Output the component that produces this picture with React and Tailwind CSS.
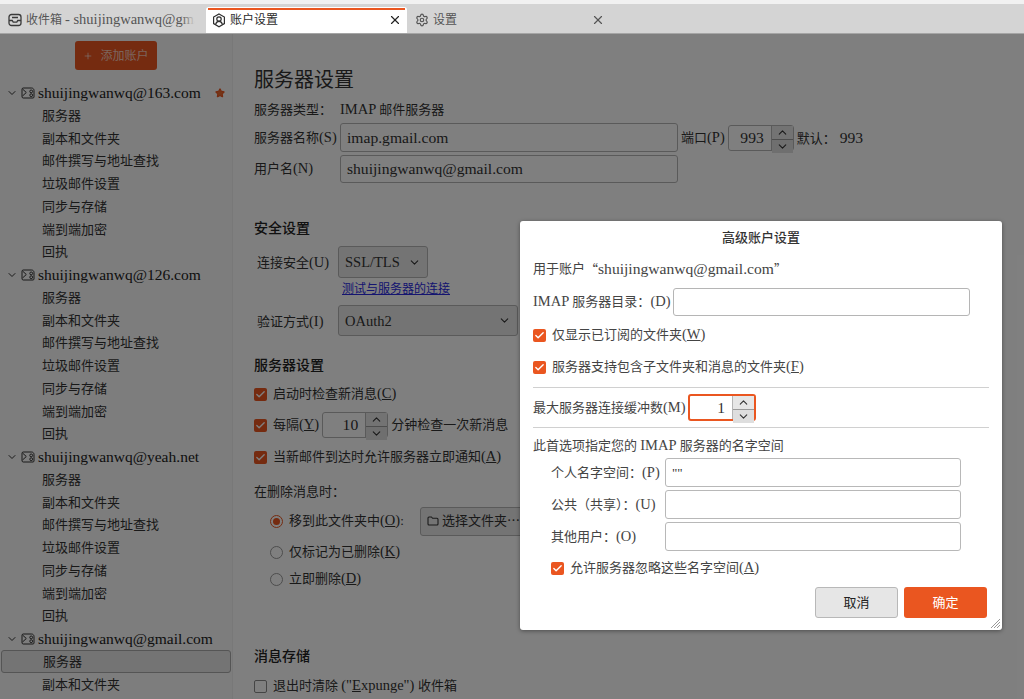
import React from "react";
import { ChevronDown, ChevronUp, X, Settings, Plus, Star, Check } from "lucide-react";

const font = "font-['Liberation_Serif','Noto_Sans_CJK_SC',serif]";

const L = ({ children, className = "" }) => <span className={`text-[14.5px] ${className}`}>{children}</span>;
const K = ({ c }) => (
  <L>
    (<span className="underline">{c}</span>)
  </L>
);

const InboxIcon = () => (
  <svg width="14" height="14" viewBox="0 0 14 14" fill="none" stroke="#3a3a3a" strokeWidth="1.3" className="shrink-0">
    <rect x="1" y="1.5" width="12" height="11" rx="2.5" />
    <path d="M1 7.5h3.2l1 1.6h3.6l1-1.6H13M4 4.5h6" />
  </svg>
);

const AccountTabIcon = () => (
  <svg width="14" height="15" viewBox="0 0 14 15" fill="none" stroke="#2f2f2f" strokeWidth="1.2" className="shrink-0">
    <path d="M7 1l5.4 3v6.6L7 13.8 1.6 10.6V4z" />
    <circle cx="7" cy="6" r="2.2" />
    <path d="M3.6 11.4c.5-2 1.8-3 3.4-3s2.9 1 3.4 3" />
  </svg>
);

const MailIcon = () => (
  <svg width="14" height="12" viewBox="0 0 14 12" fill="none" stroke="#333" strokeWidth="1" className="shrink-0">
    <path d="M2.2 1h8.4C12 1 13 2.1 13 3.5V10c0 .6-.4 1-1 1H2.2C1.5 11 1 10.5 1 9.8V2.2C1 1.5 1.5 1 2.2 1z" />
    <path d="M1.5 2l3.8 3.5L1.5 9" />
    <circle cx="10.2" cy="4.4" r="1.4" />
    <circle cx="10.2" cy="8.2" r="1.4" />
  </svg>
);

const Checkbox = ({ on = true }) => (
  <span
    className={`flex h-[13px] w-[13px] shrink-0 items-center justify-center rounded-[2px] ${
      on ? "bg-[#ea5620]" : "border border-[#8a8a8a] bg-white"
    }`}
  >
    {on && <Check size={11} strokeWidth={3} className="text-white" />}
  </span>
);

const Radio = ({ on }) => (
  <span
    className={`flex h-[13px] w-[13px] shrink-0 items-center justify-center rounded-full border bg-white ${
      on ? "border-[#ea5620]" : "border-[#9a9a9a]"
    }`}
  >
    {on && <span className="h-[7px] w-[7px] rounded-full bg-[#ea5620]" />}
  </span>
);

const TextInput = ({ className = "", children }) => (
  <div
    className={`flex items-center rounded-[3px] border border-[#b5b5b5] bg-white px-[6px] text-[15.6px] text-[#333] ${className}`}
  >
    {children}
  </div>
);

const Spinner = ({ value, className = "", focus }) => (
  <div
    className={`flex items-stretch rounded-[3px] bg-white ${
      focus ? "border-2 border-[#ea5620]" : "border border-[#b5b5b5]"
    } ${className}`}
  >
    <span className="flex flex-1 items-center justify-end pr-[7px] text-[15.6px] text-[#333]">{value}</span>
    <span className="flex w-[22px] flex-col border-l border-[#b5b5b5]">
      <span className="flex flex-1 items-center justify-center bg-[#e6e6e6]">
        <ChevronUp size={13} className="text-[#333]" />
      </span>
      <span className="flex flex-1 items-center justify-center border-t border-[#9a9a9a] bg-[#dedede]">
        <ChevronDown size={13} className="text-[#333]" />
      </span>
    </span>
  </div>
);

const Select = ({ label, className = "" }) => (
  <div
    className={`flex items-center justify-between rounded-[3px] border border-[#b5b5b5] bg-[#e9e9e9] px-[6px] text-[14.5px] text-[#333] ${className}`}
  >
    <span className="pt-[2px]">{label}</span>
    <ChevronDown size={13} className="text-[#333]" />
  </div>
);

const items = ["服务器", "副本和文件夹", "邮件撰写与地址查找", "垃圾邮件设置", "同步与存储", "端到端加密", "回执"];

const Account = ({ name, star, selected, limit = 7 }) => (
  <div>
    <div className="flex h-[22.75px] items-center pl-[6px] pr-[7px]">
      <ChevronDown size={12} className="mr-[3px] shrink-0 text-[#333]" />
      <MailIcon />
      <span className="ml-[3px] flex-1 text-[15.5px] text-[#222]">{name}</span>
      {star && <Star size={10} strokeWidth={2.5} className="fill-[#ea6a30] text-[#ea5620]" />}
    </div>
    {items.slice(0, limit).map((t, i) => (
      <div
        key={t}
        className={`mx-[1px] flex h-[22.75px] items-center pl-[41px] text-[13px] text-[#333] ${
          selected && i === 0 ? "rounded-[3px] border border-[#aaa] bg-[#e8e8e8] pl-[40px]" : ""
        }`}
      >
        {t}
      </div>
    ))}
  </div>
);

const Tab = ({ icon, label, active, close, fade, className = "" }) => (
  <div
    className={`relative flex h-full items-center overflow-hidden text-[12px] ${
      active ? "gap-[4px] rounded-t-[3px] bg-white pl-[6px] text-[#2b2b2b]" : "gap-[4px] pl-[8px] text-[#555]"
    } ${fade ? "pr-[10px]" : ""} ${className}`}
  >
    {active && <span className="absolute inset-x-[2px] top-[1px] h-[2px] bg-[#ea5620]" />}
    {icon}
    <span className="min-w-0 flex-1 overflow-hidden whitespace-nowrap">{label}</span>
    {fade && <span className="absolute right-[10px] top-0 h-full w-[14px] bg-gradient-to-r from-transparent to-[#d4d4d4]" />}
    {close && <X size={14} className={`shrink-0 ${active ? "mr-[5px] text-[#222]" : "mr-[2px] text-[#555]"}`} />}
  </div>
);

const Line = ({ children, className = "" }) => (
  <div className={`flex h-[20px] items-center text-[13px] text-[#333] ${className}`}>{children}</div>
);

const Heading = ({ children, className = "" }) => (
  <div className={`flex h-[20px] items-center text-[14px] font-medium text-[#222] ${className}`}>{children}</div>
);

const DlgLabel = ({ children, className = "" }) => (
  <span className={`shrink-0 whitespace-pre text-[13px] text-[#444] ${className}`}>{children}</span>
);

const NsRow = ({ label, k, value, className = "" }) => (
  <div className={`flex h-[29px] items-center pl-[18px] ${className}`}>
    <DlgLabel className="w-[114px]">
      {label}
      <L>({k})</L>
    </DlgLabel>
    <TextInput className="h-[29px] w-[296px] !border-[#b8b8b8] !text-[13px]">{value}</TextInput>
  </div>
);

export default function App() {
  return (
    <div className={`relative flex h-[699px] w-[1024px] flex-col overflow-hidden bg-white ${font}`}>
      <div className="h-[4px] bg-[#f1f1f1]" />
      <div className="flex h-[30px] items-stretch border-b border-[#a5a5a5] bg-[#d4d4d4] pt-[3px]">
        <Tab
          fade
          className="w-[205px]"
          icon={<InboxIcon />}
          label={
            <>
              收件箱 <span className="text-[14.5px]">- shuijingwanwq@gmail.com</span>
            </>
          }
        />
        <Tab className="ml-[1px] w-[201px]" active close icon={<AccountTabIcon />} label="账户设置" />
        <Tab className="w-[200px]" close icon={<Settings size={14} className="shrink-0" />} label="设置" />
      </div>

      <div className="flex min-h-0 flex-1">
        <aside className="w-[233px] shrink-0 border-r border-[#f0f0f0] bg-[#fafafa]">
          <div className="flex justify-center pb-[11.5px] pt-[7px]">
            <div className="flex h-[29px] w-[82px] items-center justify-center gap-[7px] rounded-[3px] bg-[#ea5620] text-[12px] text-white/70">
              <Plus size={10} />
              添加账户
            </div>
          </div>
          <Account name="shuijingwanwq@163.com" star />
          <Account name="shuijingwanwq@126.com" />
          <Account name="shuijingwanwq@yeah.net" />
          <Account name="shuijingwanwq@gmail.com" selected limit={2} />
        </aside>

        <main className="min-w-0 flex-1 pl-[21px] pt-[32px]">
          <div className="flex h-[28px] items-center text-[20px] text-[#333]">服务器设置</div>
          <Line className="mt-[6px]">
            <span className="w-[86px]">服务器类型：</span>
            <span className="whitespace-pre">
              <L>IMAP </L>邮件服务器
            </span>
          </Line>
          <div className="mt-[3px] flex h-[29px] items-center text-[13px] text-[#333]">
            <span className="w-[86px] whitespace-nowrap">
              服务器名称<L>(S)</L>
            </span>
            <TextInput className="h-[29px] w-[338px]">imap.gmail.com</TextInput>
            <span className="ml-[3px] whitespace-nowrap">
              端口<L>(P)</L>
            </span>
            <Spinner value="993" className="ml-[3px] h-[26px] w-[66px]" />
            <span className="ml-[3px] whitespace-nowrap">
              默认：<span className="ml-[4px] text-[15.6px]">993</span>
            </span>
          </div>
          <div className="mt-[3px] flex h-[28px] items-center text-[13px] text-[#333]">
            <span className="w-[86px]">
              用户名<L>(N)</L>
            </span>
            <TextInput className="h-[28px] w-[338px]">shuijingwanwq@gmail.com</TextInput>
          </div>

          <Heading className="mt-[35px]">安全设置</Heading>
          <div className="mt-[8px] flex h-[32px] items-center pl-[3px] text-[13px] text-[#333]">
            <span className="w-[81px] pt-[2px]">
              连接安全<L>(U)</L>
            </span>
            <Select label="SSL/TLS" className="h-[32px] w-[90px]" />
          </div>
          <Line className="ml-[88px] mt-[1px] !text-[12px]">
            <span className="text-[#2a2ae0] underline">测试与服务器的连接</span>
          </Line>
          <div className="mt-[6px] flex h-[31px] items-center pl-[3px] text-[13px] text-[#333]">
            <span className="w-[81px] pt-[2px]">
              验证方式<L>(I)</L>
            </span>
            <Select label="OAuth2" className="h-[31px] w-[180px]" />
          </div>

          <Heading className="mt-[19px]">服务器设置</Heading>
          <Line className="mt-[9px] gap-[6px]">
            <Checkbox />
            <span>
              启动时检查新消息
              <K c="C" />
            </span>
          </Line>
          <div className="mt-[11px] flex h-[20px] items-center gap-[6px] text-[13px] text-[#333]">
            <Checkbox />
            <span>
              每隔
              <K c="Y" />
            </span>
            <Spinner value="10" className="-my-[3px] ml-[-3px] h-[26px] w-[66px]" />
            <span className="ml-[-3px]">分钟检查一次新消息</span>
          </div>
          <Line className="mt-[12px] gap-[6px]">
            <Checkbox />
            <span>
              当新邮件到达时允许服务器立即通知
              <K c="A" />
            </span>
          </Line>
          <Line className="mt-[15px]">在删除消息时：</Line>
          <div className="mt-[4px] flex h-[30px] items-center gap-[6px] pl-[16px] text-[13px] text-[#333]">
            <Radio on />
            <span className="w-[125px]">
              移到此文件夹中
              <K c="O" />:
            </span>
            <div className="flex h-[29px] w-[120px] items-center gap-[3px] rounded-l-[3px] border border-[#b5b5b5] bg-[#e9e9e9] pl-[6px]">
              <svg width="12" height="10" viewBox="0 0 12 10" fill="none" stroke="#333" strokeWidth="1.1">
                <path d="M1 2c0-.6.4-1 1-1h2.4l1.2 1.3H10c.6 0 1 .4 1 1V8c0 .6-.4 1-1 1H2c-.6 0-1-.4-1-1z" />
              </svg>
              选择文件夹⋯
            </div>
          </div>
          <Line className="mt-[6px] gap-[6px] pl-[16px]">
            <Radio />
            <span>
              仅标记为已删除
              <K c="K" />
            </span>
          </Line>
          <Line className="mt-[7px] gap-[6px] pl-[16px]">
            <Radio />
            <span>
              立即删除
              <K c="D" />
            </span>
          </Line>
          <Heading className="mt-[57px]">消息存储</Heading>
          <Line className="mt-[10px] gap-[6px]">
            <Checkbox on={false} />
            <span className="whitespace-pre">
              退出时清除 <L>("<span className="underline">E</span>xpunge") </L>收件箱
            </span>
          </Line>
        </main>
      </div>

      {/* modal backdrop */}
      <div className="absolute inset-x-0 bottom-0 top-[34px] bg-black/50" />

      {/* dialog */}
      <div className="absolute left-[520px] top-[221px] flex h-[409px] w-[482px] flex-col rounded-[3px] bg-white px-[13px] shadow-[0_1px_4px_rgba(0,0,0,0.4)]">
        <div className="flex h-[34px] items-center justify-center text-[13px] font-medium text-[#333]">高级账户设置</div>
        <div className="mt-[4px] flex h-[20px] items-center text-[13px] text-[#444]">
          用于账户<span className="font-['Noto_Sans_CJK_SC']">“</span>
          <span className="text-[15.6px]">shuijingwanwq@gmail.com</span>
          <span className="font-['Noto_Sans_CJK_SC']">”</span>
        </div>
        <div className="mt-[9px] flex h-[28px] items-center">
          <DlgLabel className="w-[140px]">
            <L>IMAP </L>服务器目录：<L>(D)</L>
          </DlgLabel>
          <TextInput className="h-[28px] w-[297px]" />
        </div>
        <div className="mt-[9px] flex h-[20px] items-center gap-[6px]">
          <Checkbox />
          <DlgLabel>
            仅显示已订阅的文件夹
            <K c="W" />
          </DlgLabel>
        </div>
        <div className="mt-[12px] flex h-[20px] items-center gap-[6px]">
          <Checkbox />
          <DlgLabel>
            服务器支持包含子文件夹和消息的文件夹
            <K c="F" />
          </DlgLabel>
        </div>
        <hr className="mt-[10px] border-t border-[#d0d0d0]" />
        <div className="mt-[6px] flex h-[27px] items-center">
          <DlgLabel className="w-[155px]">
            最大服务器连接缓冲数<L>(M)</L>
          </DlgLabel>
          <Spinner value="1" focus className="h-[27px] w-[68px]" />
        </div>
        <hr className="mt-[6px] border-t border-[#d0d0d0]" />
        <div className="mt-[8px] flex h-[20px] items-center">
          <DlgLabel>
            此首选项指定您的 <L>IMAP </L>服务器的名字空间
          </DlgLabel>
        </div>
        <NsRow className="mt-[2px]" label="个人名字空间：" k="P" value='""' />
        <NsRow className="mt-[3px]" label="公共（共享）：" k="U" />
        <NsRow className="mt-[3px]" label="其他用户：" k="O" />
        <div className="mt-[7px] flex h-[20px] items-center gap-[6px] pl-[18px]">
          <Checkbox />
          <DlgLabel>
            允许服务器忽略这些名字空间
            <K c="A" />
          </DlgLabel>
        </div>
        <div className="mt-[9px] flex justify-end gap-[6px] pr-[2px]">
          <div className="flex h-[31px] w-[83px] items-center justify-center rounded-[3px] border border-[#b8b8b8] bg-[#e6e6e6] text-[13px] text-[#222]">取消</div>
          <div className="flex h-[31px] w-[83px] items-center justify-center rounded-[3px] bg-[#ea5620] text-[13px] text-white">确定</div>
        </div>
        <svg width="9" height="9" viewBox="0 0 9 9" stroke="#999" className="absolute bottom-[2px] right-[2px]">
          <path d="M0 9L9 0M3 9l6-6M6 9l3-3" />
        </svg>
      </div>
    </div>
  );
}
